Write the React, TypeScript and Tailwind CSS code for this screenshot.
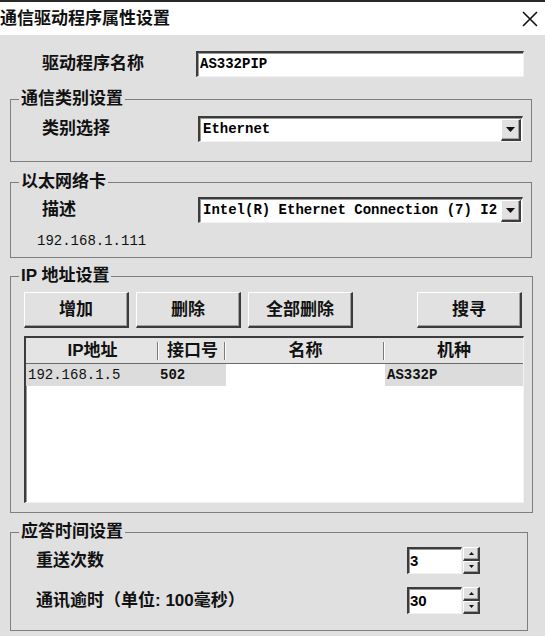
import type { ReactNode } from 'react';

const cjk = "font-['Liberation_Sans','Noto_Sans_CJK_SC',sans-serif]";
const mono = "font-['Liberation_Mono','Noto_Sans_CJK_SC',monospace]";

// classic 3D borders
const sunken =
  'bg-white border-t-2 border-l-2 border-t-[#3c3c3c] border-l-[#3c3c3c] border-b border-r border-b-[#f2f2f2] border-r-[#f2f2f2] shadow-[inset_1px_1px_0_#9a9a9a]';
const raised =
  'bg-[#e1e1e1] border-t border-l border-t-white border-l-white border-b-2 border-r-2 border-b-[#3c3c3c] border-r-[#3c3c3c] shadow-[inset_-1px_-1px_0_#a0a0a0]';

function Group({ title, children, className }: { title: string; children: ReactNode; className?: string }) {
  return (
    <fieldset className={`border border-[#7e7e7e] px-[8px] ${className ?? ''}`}>
      <legend className={`px-[2px] h-[20px] leading-[20px] text-[17px] font-bold text-[#111] ${cjk}`}>{title}</legend>
      {children}
    </fieldset>
  );
}

function DropArrow() {
  return (
    <div className={`w-[20px] h-[22px] mr-[1px] flex items-center justify-center ${raised}`}>
      <svg width="9" height="5" viewBox="0 0 9 5">
        <path d="M0 0 H9 L4.5 5 Z" fill="#111" />
      </svg>
    </div>
  );
}

function Combo({ value }: { value: string }) {
  return (
    <div className={`w-[325px] h-[26px] flex items-center ${sunken}`}>
      <span className={`flex-1 pl-[3px] text-[14px] font-bold text-black whitespace-nowrap overflow-hidden ${mono}`}>{value}</span>
      <DropArrow />
    </div>
  );
}

function Spin({ value }: { value: string }) {
  return (
    <div className="flex items-center">
      <div className={`w-[55px] h-[27px] flex items-center ${sunken}`}>
        <span className={`pl-[1px] text-[15px] font-bold text-black ${cjk}`}>{value}</span>
      </div>
      <div className="ml-[1px] w-[17px] h-[27px] flex flex-col">
        <div className={`flex-1 flex items-center justify-center ${raised}`}>
          <svg width="5" height="3" viewBox="0 0 5 3">
            <path d="M0 3 H5 L2.5 0 Z" fill="#111" />
          </svg>
        </div>
        <div className={`flex-1 flex items-center justify-center ${raised}`}>
          <svg width="5" height="3" viewBox="0 0 5 3">
            <path d="M0 0 H5 L2.5 3 Z" fill="#111" />
          </svg>
        </div>
      </div>
    </div>
  );
}

function Btn({ label }: { label: string }) {
  return (
    <div className={`w-[105px] h-[36px] flex items-center justify-center text-[17px] font-bold text-[#111] ${cjk} ${raised}`}>
      {label}
    </div>
  );
}

const columns = [
  { title: 'IP地址', w: 'w-[133px]' },
  { title: '接口号', w: 'w-[67px]' },
  { title: '名称', w: 'w-[159px]' },
  { title: '机种', w: 'flex-1' },
];

export default function App() {
  return (
    <div className={`w-[545px] h-[636px] bg-[#e0e0e0] overflow-hidden flex flex-col ${cjk}`}>
      <div className="h-[2px] bg-[#2a2a2a]" />
      {/* title bar */}
      <div className="h-[33px] bg-white flex items-center justify-between">
        <span className="text-[17px] font-bold text-[#111] leading-none">通信驱动程序属性设置</span>
        <svg className="mr-[7px]" width="16" height="16" viewBox="0 0 16 16">
          <path d="M1 1 L15 15 M15 1 L1 15" stroke="#111" strokeWidth="1.6" />
        </svg>
      </div>

      <div className="px-[10px] w-[538px] flex flex-col">
        {/* driver name */}
        <div className="mt-[16px] flex items-center pl-[32px]">
          <span className="w-[154px] text-[17px] font-bold text-[#111]">驱动程序名称</span>
          <div className={`w-[328px] h-[26px] flex items-center ${sunken}`}>
            <span className={`pl-[2px] text-[14px] font-bold text-black ${mono}`}>AS332PIP</span>
          </div>
        </div>

        <Group title="通信类别设置" className="mt-[12px]">
          <div className="pt-[7px] pb-[19px] pl-[23px] flex items-center">
            <span className="w-[156px] text-[17px] font-bold text-[#111]">类别选择</span>
            <Combo value="Ethernet" />
          </div>
        </Group>

        <Group title="以太网络卡" className="mt-[10px]">
          <div className="pt-[5px] pl-[23px] flex items-center">
            <span className="w-[156px] text-[17px] font-bold text-[#111]">描述</span>
            <Combo value="Intel(R) Ethernet Connection (7) I2" />
          </div>
          <div className={`mt-[8px] pb-[6px] pl-[18px] h-[26px] leading-[20px] text-[14px] text-[#111] ${mono}`}>192.168.1.111</div>
        </Group>

        <Group title="IP 地址设置" className="mt-[8px]">
          <div className="pt-[6px] pl-[5px] pr-[2px] flex items-center gap-[7px]">
            <Btn label="增加" />
            <Btn label="删除" />
            <Btn label="全部删除" />
            <div className="ml-auto">
              <Btn label="搜寻" />
            </div>
          </div>
          {/* address list */}
          <div className={`mt-[8px] mb-[9px] ml-[5px] w-[500px] h-[167px] flex flex-col ${sunken}`}>
            <div className="h-[26px] bg-[#e4e4e4] border-b border-b-[#6a6a6a] flex">
              {columns.map((c, i) => (
                <div key={c.title} className={`${c.w} h-full flex items-center justify-center relative`}>
                  <span className="text-[17px] font-bold text-[#111]">{c.title}</span>
                  {i < 3 && <span className="absolute right-0 top-[4px] h-[18px] w-[2px] border-l border-l-[#7a7a7a] border-r border-r-white" />}
                </div>
              ))}
            </div>
            <div className="h-[22px] flex items-center">
              <div className={`w-[200px] h-full bg-[#dcdcdc] flex items-center text-[14px] text-[#111] ${mono}`}>
                <span className="w-[133px] pl-[2px]">192.168.1.5</span>
                <span className="pl-[1px] font-bold">502</span>
              </div>
              <div className="w-[159px] h-full" />
              <div className={`flex-1 h-full bg-[#dcdcdc] flex items-center pl-[2px] text-[14px] font-bold text-[#111] ${mono}`}>AS332P</div>
            </div>
          </div>
        </Group>

        <Group title="应答时间设置" className="mt-[9px]">
          <div className="pt-[5px] pb-[16px] pl-[17px] flex flex-col gap-[13px]">
            <div className="flex items-center">
              <span className="w-[371px] text-[17px] font-bold text-[#111]">重送次数</span>
              <Spin value="3" />
            </div>
            <div className="flex items-center">
              <span className="w-[371px] text-[17px] font-bold text-[#111]">通讯逾时（单位: 100毫秒）</span>
              <Spin value="30" />
            </div>
          </div>
        </Group>
      </div>
    </div>
  );
}
